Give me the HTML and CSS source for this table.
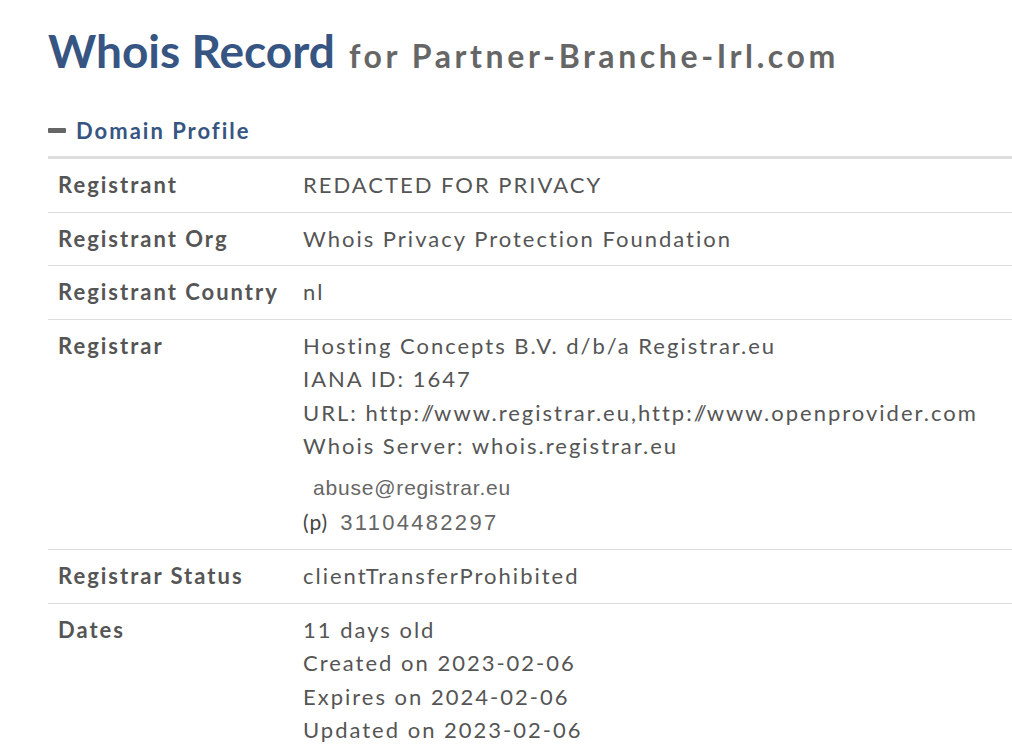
FILE: index.html
```html
<!DOCTYPE html>
<html>
<head>
<meta charset="utf-8">
<link rel="stylesheet" href="styles.css">
</head>
<body>
<div class="page">
  <h1 class="title"><span class="title-main">Whois Record</span> <span class="title-sub">for Partner-Branche-Irl.com</span></h1>
  <div class="section-head">
    <span class="minus"></span>
    <span class="section-title">Domain Profile</span>
  </div>
  <table class="profile">
    <tr>
      <th>Registrant</th>
      <td>REDACTED FOR PRIVACY</td>
    </tr>
    <tr>
      <th>Registrant Org</th>
      <td>Whois Privacy Protection Foundation</td>
    </tr>
    <tr>
      <th>Registrant Country</th>
      <td>nl</td>
    </tr>
    <tr>
      <th>Registrar</th>
      <td>
        <div>Hosting Concepts B.V. d/b/a Registrar.eu</div>
        <div>IANA ID: 1647</div>
        <div>URL: http:<span class="sl">//</span>www.registrar.eu,http:<span class="sl">//</span>www.openprovider.com</div>
        <div>Whois Server: whois.registrar.eu</div>
        <div class="email">abuse@registrar.eu</div>
        <div class="phone-line"><span class="p">(p)</span><span class="phone">31104482297</span></div>
      </td>
    </tr>
    <tr>
      <th>Registrar Status</th>
      <td>clientTransferProhibited</td>
    </tr>
    <tr>
      <th>Dates</th>
      <td>
        <div>11 days old</div>
        <div>Created on 2023-02-06</div>
        <div>Expires on 2024-02-06</div>
        <div>Updated on 2023-02-06</div>
      </td>
    </tr>
  </table>
</div>
</body>
</html>
```

FILE: styles.css
```css
html, body {
  margin: 0;
  padding: 0;
  background: #fff;
}
body {
  font-family: Lato, "Open Sans", sans-serif;
  color: #555;
}
.page {
  padding: 22px 0 0 48px;
}
.title {
  margin: 0;
  display: flex;
  align-items: baseline;
  gap: 14px;
  font-weight: 700;
  line-height: 58px;
  white-space: nowrap;
}
.title-main {
  font-size: 46px;
  color: #375582;
}
.title-sub {
  font-size: 32px;
  color: #666;
  letter-spacing: 3.6px;
}
.section-head {
  display: flex;
  align-items: center;
  margin-top: 29px;
  height: 32px;
}
.minus {
  width: 18px;
  height: 5px;
  background: #666;
  border-radius: 1px;
  margin-right: 10px;
}
.section-title {
  font-size: 22px;
  font-weight: 700;
  color: #375582;
  letter-spacing: 2px;
}
.profile {
  margin-top: 10px;
  width: 964px;
  border-collapse: collapse;
  border-top: 3px solid #ddd;
  font-size: 22px;
  line-height: 33.5px;
  letter-spacing: 2px;
}
.profile th, .profile td {
  text-align: left;
  vertical-align: top;
  padding: 9px 10px 10px 10px;
  border-bottom: 1px solid #ddd;
}
.profile th {
  width: 225px;
  font-weight: 700;
  color: #555;
  white-space: nowrap;
}
.profile td {
  font-weight: 400;
  color: #555;
  white-space: nowrap;
}
.sl {
  letter-spacing: -2px;
  margin-right: 2px;
}
.email {
  font-family: "Liberation Sans", Arial, sans-serif;
  font-size: 21px;
  color: #666;
  letter-spacing: 0.8px;
  padding: 8px 0 0 10px;
  line-height: 34px;
}
.phone-line {
  display: flex;
  align-items: baseline;
}
.p {
  font-size: 21px;
  color: #444;
  margin-right: 12px;
  letter-spacing: 1px;
}
.phone {
  font-family: "Liberation Sans", Arial, sans-serif;
  font-size: 22px;
  color: #666;
  letter-spacing: 2.3px;
}
```
